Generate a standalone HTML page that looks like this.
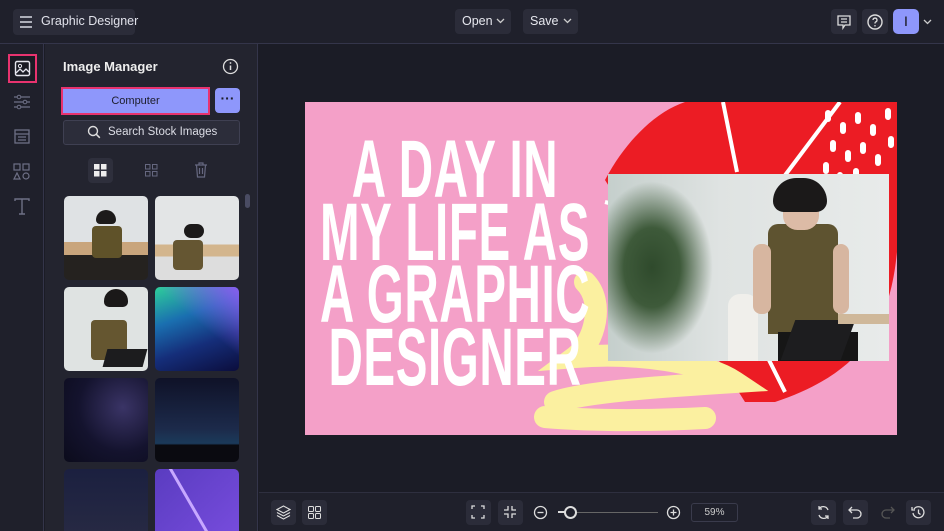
<!DOCTYPE html>
<html style="width:944px;height:531px;overflow:hidden"><head><meta charset="utf-8"><style>
*{margin:0;padding:0;box-sizing:border-box}
body{width:944px;height:531px;overflow:hidden;background:#1b1c26;font-family:"Liberation Sans",sans-serif;color:#e6e7ee;position:relative}
.abs{position:absolute}
.btn{position:absolute;background:#2b2c39;border-radius:4px}
svg{display:block}
.thumb{position:absolute;width:84px;height:84px;border-radius:5px;overflow:hidden}
.big{position:absolute;left:-150px;width:600px;text-align:center;color:#fff;font-weight:bold;font-size:82px;line-height:62px;letter-spacing:1px;transform:scaleX(0.58);transform-origin:center;white-space:nowrap}
</style></head><body>
<!-- top bar -->
<div class="abs" style="left:0;top:0;width:944px;height:44px;background:#1f202b;border-bottom:1px solid #34354a"></div>
<div class="btn" style="left:13px;top:9px;width:122px;height:26px"></div>
<svg class="abs" style="left:18px;top:14px" width="16" height="16"><path d="M2 3h12M2 8h12M2 13h12" stroke="#d8d9e2" stroke-width="1.6"/></svg>
<div class="abs" style="left:41px;top:14px;font-size:12.5px;color:#e0e1ea">Graphic Designer</div>
<div class="btn" style="left:455px;top:9px;width:56px;height:25px"></div>
<div class="abs" style="left:462px;top:14px;font-size:12.5px">Open</div>
<svg class="abs" style="left:496px;top:18px" width="9" height="6"><path d="M1 1l3.5 3.5L8 1" stroke="#ccc" fill="none" stroke-width="1.3"/></svg>
<div class="btn" style="left:523px;top:9px;width:55px;height:25px"></div>
<div class="abs" style="left:530px;top:14px;font-size:12.5px">Save</div>
<svg class="abs" style="left:563px;top:18px" width="9" height="6"><path d="M1 1l3.5 3.5L8 1" stroke="#ccc" fill="none" stroke-width="1.3"/></svg>
<div class="btn" style="left:831px;top:9px;width:26px;height:25px"></div>
<svg class="abs" style="left:836px;top:14px" width="16" height="16"><path d="M2 2h12v9H9l-2 3v-3H2z" stroke="#ddd" fill="none" stroke-width="1.3"/><path d="M5 5h6M5 8h6" stroke="#ddd" stroke-width="1.2"/></svg>
<div class="btn" style="left:862px;top:9px;width:26px;height:25px"></div>
<svg class="abs" style="left:866px;top:13px" width="18" height="18"><circle cx="9" cy="9" r="7" stroke="#ddd" fill="none" stroke-width="1.4"/><path d="M7 7a2 2 0 1 1 2.5 2c-.5.3-.5.8-.5 1.5" stroke="#ddd" fill="none" stroke-width="1.3"/><circle cx="9" cy="12.8" r=".8" fill="#ddd"/></svg>
<div class="abs" style="left:893px;top:9px;width:26px;height:25px;background:#8e97fb;border-radius:5px;color:#111;font-size:14px;text-align:center;line-height:25px">I</div>
<svg class="abs" style="left:923px;top:19px" width="9" height="6"><path d="M1 1l3.5 3.5L8 1" stroke="#ccc" fill="none" stroke-width="1.3"/></svg>

<!-- left rail -->
<div class="abs" style="left:0;top:44px;width:44px;height:487px;background:#1f202b;border-right:1px solid #34354a"></div>
<div class="abs" style="left:8px;top:54px;width:29px;height:29px;border:2px solid #e8336f;background:#1a1b24"></div>
<svg class="abs" style="left:14px;top:60px" width="17" height="17"><rect x="1.5" y="1.5" width="14" height="14" rx="1.5" stroke="#e5e5ee" fill="none" stroke-width="1.4"/><circle cx="6" cy="6" r="1.6" stroke="#e5e5ee" fill="none"/><path d="M2 13l4-4 3 3 3-3 3 3" stroke="#e5e5ee" fill="none" stroke-width="1.3"/></svg>
<svg class="abs" style="left:13px;top:94px" width="18" height="16"><path d="M1 3h16M1 8h16M1 13h16" stroke="#6e7086" stroke-width="1.3"/><circle cx="6" cy="3" r="1.8" fill="#1f202b" stroke="#6e7086"/><circle cx="12" cy="8" r="1.8" fill="#1f202b" stroke="#6e7086"/><circle cx="6" cy="13" r="1.8" fill="#1f202b" stroke="#6e7086"/></svg>
<svg class="abs" style="left:14px;top:129px" width="16" height="15"><rect x="1" y="1" width="14" height="13" stroke="#6e7086" fill="none" stroke-width="1.3"/><path d="M1 5h14M4 8h8M4 11h8" stroke="#6e7086" stroke-width="1.2"/></svg>
<svg class="abs" style="left:13px;top:163px" width="18" height="17"><rect x="1" y="1" width="6" height="6" stroke="#6e7086" fill="none" stroke-width="1.2"/><rect x="10" y="1" width="6" height="6" stroke="#6e7086" fill="none" stroke-width="1.2"/><path d="M4 10l3 6H1z" stroke="#6e7086" fill="none" stroke-width="1.2"/><circle cx="13" cy="13" r="3" stroke="#6e7086" fill="none" stroke-width="1.2"/></svg>
<svg class="abs" style="left:13px;top:198px" width="18" height="17"><path d="M2 3V1h14v2M9 1v15M6 16h6" stroke="#6e7086" fill="none" stroke-width="1.4"/></svg>

<!-- panel -->
<div class="abs" style="left:45px;top:44px;width:213px;height:487px;background:#23242f;border-right:1px solid #34354a;overflow:hidden">
<div class="thumb" style="left:19px;top:152px;background:linear-gradient(#dfe2e4 0 55%,#c9a57c 55% 70%,#25221f 70%)"><div class="abs" style="left:28px;top:30px;width:30px;height:32px;background:#5f5229;border-radius:4px"></div><div class="abs" style="left:32px;top:14px;width:20px;height:14px;background:#1c1a1a;border-radius:10px 10px 4px 4px"></div></div>
<div class="thumb" style="left:110px;top:152px;background:linear-gradient(#e3e5e6 0 58%,#d3b58d 58% 72%,#ddd 72%)"><div class="abs" style="left:18px;top:44px;width:30px;height:30px;background:#655632;border-radius:4px"></div><div class="abs" style="left:29px;top:28px;width:20px;height:14px;background:#1c1a1a;border-radius:10px"></div></div>
<div class="thumb" style="left:19px;top:243px;background:#dfe3e2"><div class="abs" style="left:27px;top:33px;width:36px;height:40px;background:#655630;border-radius:4px"></div><div class="abs" style="left:41px;top:62px;width:40px;height:18px;background:#1c1c1e;transform:skewX(-15deg)"></div><div class="abs" style="left:40px;top:2px;width:24px;height:18px;background:#1a1818;border-radius:12px 12px 5px 5px"></div></div>
<div class="thumb" style="left:110px;top:243px;background:linear-gradient(160deg,#2ecf9a 0%,#1a6fb0 35%,#152e7a 65%,#0b0d3c 100%)"><div class="abs" style="inset:0;background:linear-gradient(220deg,#8a5cf0 0%,transparent 45%)"></div></div>
<div class="thumb" style="left:19px;top:334px;background:radial-gradient(circle at 70% 35%,#3a3466 0%,#14132e 55%,#0b0b1b 100%)"></div>
<div class="thumb" style="left:110px;top:334px;background:linear-gradient(#0f1228 0%,#1c2a4a 60%,#1b3a5a 78%,#0a0a10 80%)"></div>
<div class="thumb" style="left:19px;top:425px;background:linear-gradient(#1b2040,#2a2c44)"></div>
<div class="thumb" style="left:110px;top:425px;background:linear-gradient(135deg,#5a3cc0,#7a4ee0)"><div class="abs" style="left:40px;top:-10px;width:3px;height:110px;background:#c7a8ff;transform:rotate(-30deg)"></div></div>
</div>
<div class="abs" style="left:63px;top:59px;font-size:13px;font-weight:bold;color:#eee">Image Manager</div>
<svg class="abs" style="left:222px;top:58px" width="17" height="17"><circle cx="8.5" cy="8.5" r="7" stroke="#ddd" fill="none" stroke-width="1.3"/><path d="M8.5 7.5v4.5" stroke="#ddd" stroke-width="1.5"/><circle cx="8.5" cy="5" r=".9" fill="#ddd"/></svg>
<div class="abs" style="left:61px;top:87px;width:149px;height:28px;background:#8e97fb;border:2px solid #e8336f;color:#1c1d2a;font-size:11px;text-align:center;line-height:24px">Computer</div>
<div class="abs" style="left:215px;top:88px;width:25px;height:25px;background:#8e97fb;border-radius:4px;color:#1c1d2a;font-weight:bold;text-align:center;line-height:20px;font-size:14px">···</div>
<div class="abs" style="left:63px;top:120px;width:177px;height:25px;background:#2c2d3a;border:1px solid #3f4052;border-radius:3px"></div>
<svg class="abs" style="left:87px;top:125px" width="14" height="14"><circle cx="6" cy="6" r="4.5" stroke="#ddd" fill="none" stroke-width="1.4"/><path d="M9.3 9.3l3.5 3.5" stroke="#ddd" stroke-width="1.5"/></svg>
<div class="abs" style="left:108px;top:126px;font-size:11.5px;color:#dcdde6">Search Stock Images</div>
<div class="btn" style="left:88px;top:158px;width:25px;height:25px;background:#2e2f3c"></div>
<svg class="abs" style="left:94px;top:164px" width="13" height="13"><rect x="0" y="0" width="5.5" height="5.5" fill="#eee"/><rect x="7" y="0" width="5.5" height="5.5" fill="#eee"/><rect x="0" y="7" width="5.5" height="5.5" fill="#eee"/><rect x="7" y="7" width="5.5" height="5.5" fill="#eee"/></svg>
<svg class="abs" style="left:145px;top:164px" width="13" height="13"><rect x=".5" y=".5" width="4.5" height="4.5" stroke="#666880" fill="none"/><rect x="7.5" y=".5" width="4.5" height="4.5" stroke="#666880" fill="none"/><rect x=".5" y="7.5" width="4.5" height="4.5" stroke="#666880" fill="none"/><rect x="7.5" y="7.5" width="4.5" height="4.5" stroke="#666880" fill="none"/></svg>
<svg class="abs" style="left:194px;top:162px" width="14" height="16"><path d="M1 3h12M5 3V1h4v2M2.5 3l1 12h7l1-12M5.5 6v6M8.5 6v6" stroke="#666880" fill="none" stroke-width="1.2"/></svg>
<div class="abs" style="left:245px;top:194px;width:5px;height:14px;background:#4a4c63;border-radius:3px"></div>

<!-- bottom bar -->
<div class="abs" style="left:259px;top:492px;width:685px;height:39px;background:#1f202b;border-top:1px solid #2e2f3f"></div>
<div class="btn" style="left:271px;top:500px;width:25px;height:25px"></div>
<svg class="abs" style="left:276px;top:505px" width="15" height="15"><path d="M7.5 1L1 4.5l6.5 3.5L14 4.5z M1 7.5l6.5 3.5L14 7.5M1 10.5l6.5 3.5 6.5-3.5" stroke="#ddd" fill="none" stroke-width="1.1"/></svg>
<div class="btn" style="left:302px;top:500px;width:25px;height:25px"></div>
<svg class="abs" style="left:308px;top:506px" width="13" height="13"><rect x=".5" y=".5" width="5" height="5" rx="1" stroke="#ddd" fill="none"/><rect x="7.5" y=".5" width="5" height="5" rx="1" stroke="#ddd" fill="none"/><rect x=".5" y="7.5" width="5" height="5" rx="1" stroke="#ddd" fill="none"/><rect x="7.5" y="7.5" width="5" height="5" rx="1" stroke="#ddd" fill="none"/></svg>
<div class="btn" style="left:466px;top:500px;width:25px;height:25px"></div>
<svg class="abs" style="left:471px;top:505px" width="14" height="14"><path d="M1 4V1h3M10 1h3v3M13 10v3h-3M4 13H1v-3" stroke="#ddd" fill="none" stroke-width="1.3"/></svg>
<div class="btn" style="left:498px;top:500px;width:25px;height:25px"></div>
<svg class="abs" style="left:503px;top:505px" width="14" height="14"><path d="M1 5h4V1M13 5H9V1M1 9h4v4M13 9H9v4" stroke="#ddd" fill="none" stroke-width="1.3"/></svg>
<svg class="abs" style="left:533px;top:505px" width="15" height="15"><circle cx="7.5" cy="7.5" r="6" stroke="#ddd" fill="none" stroke-width="1.3"/><path d="M4.5 7.5h6" stroke="#ddd" stroke-width="1.3"/></svg>
<div class="abs" style="left:558px;top:512px;width:100px;height:1px;background:#666"></div>
<div class="abs" style="left:558px;top:511px;width:10px;height:2px;background:#ddd"></div>
<div class="abs" style="left:564px;top:506px;width:13px;height:13px;border:2px solid #ddd;border-radius:50%;background:#1f202b"></div>
<svg class="abs" style="left:666px;top:505px" width="15" height="15"><circle cx="7.5" cy="7.5" r="6" stroke="#ddd" fill="none" stroke-width="1.3"/><path d="M4.5 7.5h6M7.5 4.5v6" stroke="#ddd" stroke-width="1.3"/></svg>
<div class="abs" style="left:691px;top:503px;width:47px;height:19px;border:1px solid #3a3b4c;border-radius:3px;font-size:10px;text-align:center;line-height:17px;color:#ccc">59%</div>
<div class="btn" style="left:811px;top:500px;width:25px;height:25px"></div>
<svg class="abs" style="left:816px;top:505px" width="15" height="15"><path d="M12 5A5 5 0 0 0 3 4M3 10a5 5 0 0 0 9 1M3 1v3h3M12 14v-3H9" stroke="#ddd" fill="none" stroke-width="1.3"/></svg>
<div class="btn" style="left:843px;top:500px;width:25px;height:25px"></div>
<svg class="abs" style="left:848px;top:506px" width="15" height="13"><path d="M4 1L1 4l3 3M1 4h8a4 4 0 0 1 0 8H5" stroke="#ddd" fill="none" stroke-width="1.3"/></svg>
<svg class="abs" style="left:880px;top:506px" width="15" height="13"><path d="M11 1l3 3-3 3M14 4H6a4 4 0 0 0 0 8h4" stroke="#555" fill="none" stroke-width="1.3"/></svg>
<div class="btn" style="left:906px;top:500px;width:25px;height:25px"></div>
<svg class="abs" style="left:911px;top:505px" width="15" height="15"><path d="M3 4a5.5 5.5 0 1 1-1 4M1 2v3h3M7.5 4.5v3.5l2 1.5" stroke="#ddd" fill="none" stroke-width="1.3"/></svg>

<!-- canvas -->
<div class="abs" style="left:305px;top:102px;width:592px;height:333px;background:#f4a0c8;overflow:hidden">
  <svg class="abs" style="left:0;top:0" width="592" height="333">
    <path d="M300 78 C320 40 350 10 380 0 L592 0 L592 150 C585 220 560 270 470 300 L440 300 Z" fill="#ec1c24"/>
    <path d="M418 0 L432 70 M475 80 L535 0 M300 100 L340 110 M460 250 L480 290" stroke="#fff" stroke-width="4"/>
    <g fill="#fff"><rect x="520" y="8" width="6" height="12" rx="3"/><rect x="535" y="20" width="6" height="12" rx="3"/><rect x="550" y="10" width="6" height="12" rx="3"/><rect x="565" y="22" width="6" height="12" rx="3"/><rect x="525" y="38" width="6" height="12" rx="3"/><rect x="540" y="48" width="6" height="12" rx="3"/><rect x="555" y="40" width="6" height="12" rx="3"/><rect x="570" y="52" width="6" height="12" rx="3"/><rect x="518" y="60" width="6" height="12" rx="3"/><rect x="532" y="70" width="6" height="10" rx="3"/><rect x="548" y="66" width="6" height="12" rx="3"/><rect x="580" y="6" width="6" height="12" rx="3"/><rect x="583" y="34" width="6" height="12" rx="3"/></g>
    <path d="M280 180 C300 200 290 240 270 255 C330 250 400 260 430 280 C350 285 280 290 250 300 M240 315 C300 320 360 318 400 316" stroke="#fbf0a0" stroke-width="22" fill="none" stroke-linecap="round"/>
  </svg>
  <div class="abs" style="left:303px;top:72px;width:281px;height:187px;background:linear-gradient(90deg,#c5cfcc 0%,#dfe3e2 40%,#e8ebea 100%);overflow:hidden">
    <div class="abs" style="left:0;top:0;width:110px;height:187px;background:radial-gradient(ellipse at 40% 50%,#2f4a2c 0%,#3e5a3a 30%,transparent 65%)"></div>
    <div class="abs" style="left:120px;top:120px;width:30px;height:70px;background:#f0efeb;border-radius:12px 12px 0 0"></div>
    <div class="abs" style="left:160px;top:50px;width:70px;height:110px;background:#5e5330;border-radius:10px 10px 0 0"></div>
    <div class="abs" style="left:145px;top:70px;width:18px;height:70px;background:#d7b6a0;border-radius:8px"></div>
    <div class="abs" style="left:225px;top:70px;width:16px;height:70px;background:#d7b6a0;border-radius:8px"></div>
    <div class="abs" style="left:175px;top:20px;width:36px;height:36px;background:#dcbba6;border-radius:40%"></div>
    <div class="abs" style="left:165px;top:4px;width:54px;height:34px;background:#1b1919;border-radius:26px 26px 12px 12px"></div>
    <div class="abs" style="left:170px;top:158px;width:80px;height:30px;background:#161616"></div>
    <div class="abs" style="left:180px;top:146px;width:60px;height:40px;background:#1d1d1f;transform:skewX(-20deg)"></div>
    <div class="abs" style="left:230px;top:140px;width:51px;height:10px;background:#cfb89a"></div>
  </div>
  <div class="abs" style="left:0;top:37px;width:300px;height:260px">
    <div class="big" style="top:0">A DAY IN</div>
    <div class="big" style="top:63px">MY LIFE AS</div>
    <div class="big" style="top:125px">A GRAPHIC</div>
    <div class="big" style="top:188px">DESIGNER</div>
  </div>
</div>
</body></html>
